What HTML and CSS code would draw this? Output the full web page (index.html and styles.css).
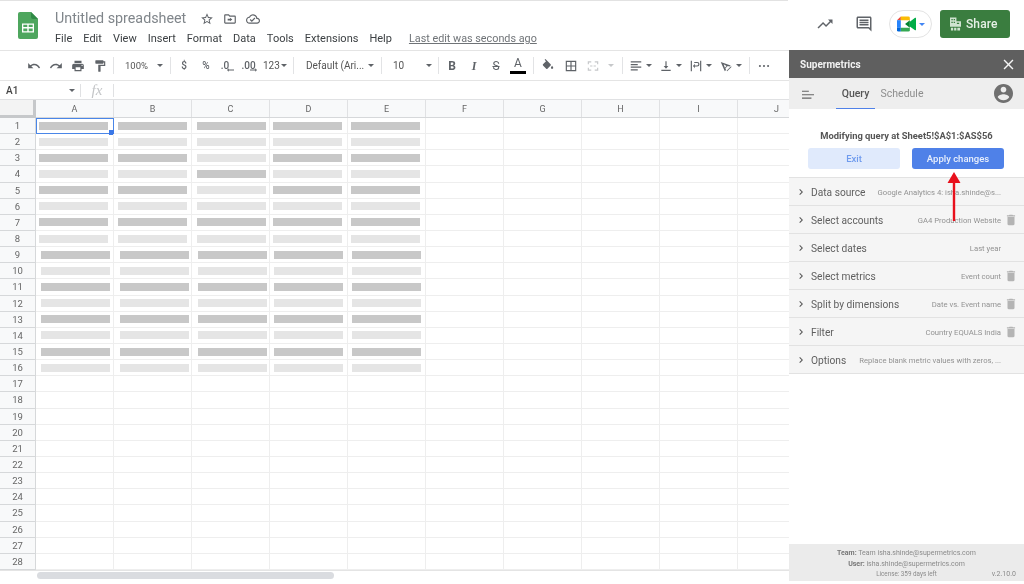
FILE: index.html
```html
<!DOCTYPE html>
<html lang="en">
<head>
<meta charset="utf-8">
<title>Untitled spreadsheet</title>
<link rel="stylesheet" href="styles.css">
</head>
<body>
<div class="topline"></div>
<header class="topbar">
  <svg class="logo" viewBox="0 0 20 27"><path fill="#4ea65e" d="M2 0h11l7 7v18a2 2 0 0 1-2 2H2a2 2 0 0 1-2-2V2a2 2 0 0 1 2-2z"/><path fill="#2f8a46" d="M13 0l7 7h-5a2 2 0 0 1-2-2z"/><path fill="#fff" d="M4 11.500h12v9H4zM5.300 12.800v2.300h4v-2.300zm5.400 0v2.300h4v-2.300zm-5.400 3.600v2.800h4v-2.800zm5.400 0v2.800h4v-2.800z" fill-rule="evenodd"/></svg>
  <div class="titleblock">
    <div class="titlerow">
      <span class="doctitle">Untitled spreadsheet</span>
      <svg class="ic14" viewBox="0 0 24 24"><path d="M22 9.240l-7.190-.62L12 2 9.190 8.630 2 9.240l5.460 4.730L5.820 21 12 17.270 18.180 21l-1.630-7.030L22 9.240zM12 15.400l-3.760 2.270 1-4.280-3.320-2.880 4.380-.38L12 6.100l1.710 4.040 4.380.38-3.320 2.880 1 4.280L12 15.400z"/></svg>
      <svg class="ic14" viewBox="0 0 24 24"><path d="M20 6h-8l-2-2H4c-1.100 0-2 .9-2 2v12c0 1.100.9 2 2 2h16c1.100 0 2-.9 2-2V8c0-1.100-.9-2-2-2zm0 12H4V6h5.170l2 2H20v10zM12 11.500V10l4 3-4 3v-1.500H8v-3z"/></svg>
      <svg class="ic14" viewBox="0 0 24 24"><path d="M19.350 10.040C18.670 6.590 15.640 4 12 4 9.110 4 6.600 5.640 5.350 8.040 2.340 8.360 0 10.910 0 14c0 3.310 2.690 6 6 6h13c2.760 0 5-2.240 5-5 0-2.640-2.050-4.780-4.650-4.960zM19 18H6c-2.210 0-4-1.790-4-4 0-2.050 1.530-3.760 3.560-3.970l1.070-.11.5-.95C8.080 7.140 9.940 6 12 6c2.620 0 4.880 1.860 5.390 4.430l.3 1.500 1.530.11c1.560.1 2.780 1.410 2.780 2.960 0 1.650-1.350 3-3 3zm-9-3.820l-2.090-2.090L6.500 13.500 10 17l6.010-6.010-1.410-1.410z"/></svg>
    </div>
    <nav class="menu">
      <span>File</span><span>Edit</span><span>View</span><span>Insert</span><span>Format</span><span>Data</span><span>Tools</span><span>Extensions</span><span>Help</span><a class="lastedit">Last edit was seconds ago</a>
    </nav>
  </div>
  <div class="topright">
    <svg class="ic18 trend" viewBox="0 0 24 24"><path d="M16 6l2.290 2.290-4.880 4.880-4-4L2 16.590 3.410 18l6-6 4 4 6.300-6.290L22 12V6z"/></svg>
    <svg class="ic18 cmt" viewBox="0 0 24 24"><path d="M21.990 4c0-1.100-.89-2-1.990-2H4c-1.100 0-2 .9-2 2v12c0 1.100.9 2 2 2h14l4 4-.01-18zM20 4v13.170L18.830 16H4V4h16zM6 12h12v2H6zm0-3h12v2H6zm0-3h12v2H6z"/></svg>
    <div class="meet">
      <svg class="meeticon" viewBox="0 0 20 16"><path fill="#ea4335" d="M4 0v4H0z"/><path fill="#fbbc04" d="M4 0h8a1.500 1.500 0 0 1 1.500 1.500V4H4z"/><path fill="#2684fc" d="M0 4h4v8H0z"/><path fill="#0066da" d="M0 12h4v4H1.500A1.500 1.500 0 0 1 0 14.500z"/><path fill="#34a853" d="M4 12h9.500v2.500A1.500 1.500 0 0 1 12 16H4z"/><path fill="#00832d" d="M8.500 8l5-4v8z"/><path fill="#00ac47" d="M13.500 5.500L19 1.500a.6.6 0 0 1 1 .5v12a.6.6 0 0 1-1 .5l-5.500-4z"/></svg>
      <i class="caret blue"></i>
    </div>
    <div class="share">
      <svg class="bld" viewBox="0 0 12 14"><path fill="#cfe3d0" d="M0 0h7v4h5v6H0zM1.500 1.500v1.500h1.500V1.500zm2.500 0v1.500h1.500V1.500zm-2.500 3v1.500h1.500V4.500zm2.500 0v1.500h1.500V4.500zm3.500 1V7h2.500V5.500zM1 11h2.500v3H1zm3.500 0H7v3H4.500zm3.500 0h3v3H8z" fill-rule="evenodd"/></svg>
      <span>Share</span>
    </div>
  </div>
</header>

<main class="main">
  <section class="sheet">
    <div class="toolbar">
      <svg class="ti" viewBox="0 0 24 24"><path d="M12.500 8c-2.650 0-5.050.99-6.900 2.600L2 7v9h9l-3.620-3.620c1.390-1.160 3.160-1.880 5.120-1.880 3.540 0 6.550 2.310 7.600 5.500l2.370-.78C21.080 11.030 17.150 8 12.500 8z"/></svg>
      <svg class="ti" viewBox="0 0 24 24"><path d="M18.400 10.600C16.550 8.990 14.150 8 11.500 8c-4.650 0-8.580 3.030-9.960 7.220L3.900 16c1.050-3.190 4.050-5.500 7.600-5.500 1.950 0 3.730.72 5.120 1.880L13 16h9V7l-3.600 3.600z"/></svg>
      <svg class="ti" viewBox="0 0 24 24"><path d="M19 8H5c-1.660 0-3 1.340-3 3v6h4v4h12v-4h4v-6c0-1.660-1.340-3-3-3zm-3 11H8v-5h8v5zm3-7c-.55 0-1-.45-1-1s.45-1 1-1 1 .45 1 1-.45 1-1 1zm-1-9H6v4h12V3z"/></svg>
      <svg class="ti" viewBox="0 0 24 24"><path d="M18 4V3c0-.55-.45-1-1-1H5c-.55 0-1 .45-1 1v4c0 .55.45 1 1 1h12c.55 0 1-.45 1-1V6h1v4H9v11c0 .55.45 1 1 1h2c.55 0 1-.45 1-1v-9h8V4h-3z"/></svg>
      <i class="sep s1"></i>
      <span class="tt w-zoom">100%</span><i class="caret c-zoom"></i>
      <i class="sep s2"></i>
      <span class="tg">$</span>
      <span class="tg">%</span>
      <span class="tg dec d1">.0<svg viewBox="0 0 8 4"><path d="M0 2l2-2v1.500h6v1H2V4z"/></svg></span>
      <span class="tg dec d2">.00<svg viewBox="0 0 8 4"><path d="M8 2L6 0v1.500H0v1h6V4z"/></svg></span>
      <span class="tt w-123">123</span><i class="caret c-123"></i>
      <i class="sep s3"></i>
      <span class="tt w-font">Default (Ari...</span><i class="caret c-font"></i>
      <i class="sep s4"></i>
      <span class="tt w-size">10</span><i class="caret c-size"></i>
      <i class="sep s5"></i>
      <span class="tl bold">B</span>
      <span class="tl ital">I</span>
      <span class="tl strike">S</span>
      <span class="tl color">A</span>
      <i class="sep s6"></i>
      <svg class="ti fill" viewBox="0 0 24 24"><path d="M16.560 8.940L7.620 0 6.210 1.410l2.380 2.380-5.150 5.150c-.59.59-.59 1.540 0 2.120l5.500 5.500c.29.29.68.44 1.060.44s.77-.15 1.060-.44l5.500-5.500c.59-.58.59-1.530 0-2.120zM19 11.500s-2 2.170-2 3.500c0 1.100.9 2 2 2s2-.9 2-2c0-1.330-2-3.500-2-3.500z"/></svg>
      <svg class="ti" viewBox="0 0 24 24"><path d="M3 3v18h18V3H3zm8 16H5v-6h6v6zm0-8H5V5h6v6zm8 8h-6v-6h6v6zm0-8h-6V5h6v6z"/></svg>
      <svg class="ti mrg" viewBox="0 0 24 24"><path d="M3 4h6v2H5v3H3zM15 4h6v5h-2V6h-4zM3 15h2v3h4v2H3zM19 15h2v5h-6v-2h4zM7 11h4v2H7zM13 11h4v2h-4z"/></svg>
      <i class="caret light c-mrg"></i>
      <i class="sep s7"></i>
      <svg class="ti" viewBox="0 0 24 24"><path d="M3 4h18v2H3zM3 8.500h12v2H3zM3 13h18v2H3zM3 17.500h12v2H3z"/></svg>
      <i class="caret c-al"></i>
      <svg class="ti" viewBox="0 0 24 24"><path d="M4 18.500h16v2H4zM11 4h2v8h3l-4 4.500L8 12h3z"/></svg>
      <i class="caret c-al"></i>
      <svg class="ti" viewBox="0 0 24 24"><path d="M3 3h2v18H3zM19 3h2v18h-2zM7 11h7a2 2 0 0 0 0-4H9V5h5a4 4 0 0 1 0 8H7v-2z M10 16l-3-4 3-4z"/></svg>
      <i class="caret c-al"></i>
      <svg class="ti" viewBox="0 0 24 24"><path d="M3 5l17 6-2 2-3-1-4 4 1 3-2 2zM8 9l2 6 3-3zM13 20l8-8v2l-7 7z"/></svg>
      <i class="caret c-rot"></i>
      <i class="sep s8"></i>
      <svg class="ti" viewBox="0 0 24 24"><circle cx="5" cy="12" r="1.800"/><circle cx="12" cy="12" r="1.800"/><circle cx="19" cy="12" r="1.800"/></svg>
    </div>
    <div class="formula">
      <span class="namebox">A1</span><i class="caret c-name"></i>
      <i class="fsep"></i>
      <span class="fx">fx</span>
      <i class="fsep"></i>
    </div>
    <div class="colhead">
      <span class="corner"></span><span>A</span><span>B</span><span>C</span><span>D</span><span>E</span><span>F</span><span>G</span><span>H</span><span>I</span><span>J</span>
    </div>
    <div class="rows">
      <div class="row"><span class="rh">1</span><b class="a1"><u class="d"></u></b><b><u class="d"></u></b><b><u class="d"></u></b><b><u class="d"></u></b><b><u class="d"></u></b><b></b><b></b><b></b><b></b><b></b></div>
      <div class="row"><span class="rh">2</span><b><u></u></b><b><u></u></b><b><u></u></b><b><u></u></b><b><u></u></b><b></b><b></b><b></b><b></b><b></b></div>
      <div class="row"><span class="rh">3</span><b><u class="d"></u></b><b><u class="d"></u></b><b><u></u></b><b><u class="d"></u></b><b><u class="d"></u></b><b></b><b></b><b></b><b></b><b></b></div>
      <div class="row"><span class="rh">4</span><b><u></u></b><b><u></u></b><b><u class="d"></u></b><b><u></u></b><b><u></u></b><b></b><b></b><b></b><b></b><b></b></div>
      <div class="row"><span class="rh">5</span><b><u class="d"></u></b><b><u class="d"></u></b><b><u></u></b><b><u class="d"></u></b><b><u class="d"></u></b><b></b><b></b><b></b><b></b><b></b></div>
      <div class="row"><span class="rh">6</span><b><u></u></b><b><u></u></b><b><u></u></b><b><u></u></b><b><u></u></b><b></b><b></b><b></b><b></b><b></b></div>
      <div class="row"><span class="rh">7</span><b><u class="d"></u></b><b><u class="d"></u></b><b><u class="d"></u></b><b><u class="d"></u></b><b><u class="d"></u></b><b></b><b></b><b></b><b></b><b></b></div>
      <div class="row"><span class="rh">8</span><b><u></u></b><b><u></u></b><b><u></u></b><b><u></u></b><b><u></u></b><b></b><b></b><b></b><b></b><b></b></div>
      <div class="row shift"><span class="rh">9</span><b><u class="d"></u></b><b><u class="d"></u></b><b><u class="d"></u></b><b><u class="d"></u></b><b><u class="d"></u></b><b></b><b></b><b></b><b></b><b></b></div>
      <div class="row shift"><span class="rh">10</span><b><u></u></b><b><u></u></b><b><u></u></b><b><u></u></b><b><u></u></b><b></b><b></b><b></b><b></b><b></b></div>
      <div class="row shift"><span class="rh">11</span><b><u class="d"></u></b><b><u class="d"></u></b><b><u class="d"></u></b><b><u class="d"></u></b><b><u class="d"></u></b><b></b><b></b><b></b><b></b><b></b></div>
      <div class="row shift"><span class="rh">12</span><b><u></u></b><b><u></u></b><b><u></u></b><b><u></u></b><b><u></u></b><b></b><b></b><b></b><b></b><b></b></div>
      <div class="row shift"><span class="rh">13</span><b><u class="d"></u></b><b><u class="d"></u></b><b><u class="d"></u></b><b><u class="d"></u></b><b><u class="d"></u></b><b></b><b></b><b></b><b></b><b></b></div>
      <div class="row shift"><span class="rh">14</span><b><u></u></b><b><u></u></b><b><u></u></b><b><u></u></b><b><u></u></b><b></b><b></b><b></b><b></b><b></b></div>
      <div class="row shift"><span class="rh">15</span><b><u class="d"></u></b><b><u class="d"></u></b><b><u class="d"></u></b><b><u class="d"></u></b><b><u class="d"></u></b><b></b><b></b><b></b><b></b><b></b></div>
      <div class="row shift"><span class="rh">16</span><b><u></u></b><b><u></u></b><b><u></u></b><b><u></u></b><b><u></u></b><b></b><b></b><b></b><b></b><b></b></div>
      <div class="row"><span class="rh">17</span><b></b><b></b><b></b><b></b><b></b><b></b><b></b><b></b><b></b><b></b></div>
      <div class="row"><span class="rh">18</span><b></b><b></b><b></b><b></b><b></b><b></b><b></b><b></b><b></b><b></b></div>
      <div class="row"><span class="rh">19</span><b></b><b></b><b></b><b></b><b></b><b></b><b></b><b></b><b></b><b></b></div>
      <div class="row"><span class="rh">20</span><b></b><b></b><b></b><b></b><b></b><b></b><b></b><b></b><b></b><b></b></div>
      <div class="row"><span class="rh">21</span><b></b><b></b><b></b><b></b><b></b><b></b><b></b><b></b><b></b><b></b></div>
      <div class="row"><span class="rh">22</span><b></b><b></b><b></b><b></b><b></b><b></b><b></b><b></b><b></b><b></b></div>
      <div class="row"><span class="rh">23</span><b></b><b></b><b></b><b></b><b></b><b></b><b></b><b></b><b></b><b></b></div>
      <div class="row"><span class="rh">24</span><b></b><b></b><b></b><b></b><b></b><b></b><b></b><b></b><b></b><b></b></div>
      <div class="row"><span class="rh">25</span><b></b><b></b><b></b><b></b><b></b><b></b><b></b><b></b><b></b><b></b></div>
      <div class="row"><span class="rh">26</span><b></b><b></b><b></b><b></b><b></b><b></b><b></b><b></b><b></b><b></b></div>
      <div class="row"><span class="rh">27</span><b></b><b></b><b></b><b></b><b></b><b></b><b></b><b></b><b></b><b></b></div>
      <div class="row"><span class="rh">28</span><b></b><b></b><b></b><b></b><b></b><b></b><b></b><b></b><b></b><b></b></div>
    </div>
    <div class="hscroll"><div class="thumb"></div></div>
  </section>

  <aside class="panel">
    <div class="phead"><span>Supermetrics</span>
      <svg viewBox="0 0 24 24"><path d="M19 6.410L17.590 5 12 10.590 6.410 5 5 6.410 10.590 12 5 17.590 6.410 19 12 13.410 17.590 19 19 17.590 13.410 12 19 6.410z"/></svg>
    </div>
    <div class="ptabs">
      <svg class="burger" viewBox="0 0 14 10"><path d="M0 0h8v1.300H0zM0 4h14v1.300H0zM0 8h11v1.300H0z"/></svg>
      <span class="tab on">Query</span>
      <span class="tab">Schedule</span>
      <svg class="acct" viewBox="2 2 20 20"><path d="M12 2C6.480 2 2 6.480 2 12s4.480 10 10 10 10-4.480 10-10S17.520 2 12 2zm0 3c1.660 0 3 1.340 3 3s-1.340 3-3 3-3-1.340-3-3 1.340-3 3-3zm0 14.200c-2.500 0-4.710-1.280-6-3.220.03-1.990 4-3.080 6-3.080 1.990 0 5.970 1.090 6 3.080-1.290 1.940-3.500 3.220-6 3.220z"/></svg>
    </div>
    <div class="modify">
      <p>Modifying query at Sheet5!$A$1:$AS$56</p>
      <div class="btns"><button class="exit">Exit</button><button class="apply">Apply changes</button></div>
    </div>
    <div class="secs">
      <div class="sec"><svg class="chev" viewBox="0 0 24 24"><path d="M10 6L8.590 7.410 13.170 12l-4.580 4.590L10 18l6-6z"/></svg><span class="sn">Data source</span><span class="sv">Google Analytics 4: isha.shinde@s...</span><i class="tr"></i></div>
      <div class="sec"><svg class="chev" viewBox="0 0 24 24"><path d="M10 6L8.590 7.410 13.170 12l-4.580 4.590L10 18l6-6z"/></svg><span class="sn">Select accounts</span><span class="sv">GA4 Production Website</span><svg class="tr" viewBox="0 0 24 24"><path d="M6 19c0 1.100.9 2 2 2h8c1.100 0 2-.9 2-2V7H6v12zM19 4h-3.500l-1-1h-5l-1 1H5v2h14V4z"/></svg></div>
      <div class="sec"><svg class="chev" viewBox="0 0 24 24"><path d="M10 6L8.590 7.410 13.170 12l-4.580 4.590L10 18l6-6z"/></svg><span class="sn">Select dates</span><span class="sv">Last year</span><i class="tr"></i></div>
      <div class="sec"><svg class="chev" viewBox="0 0 24 24"><path d="M10 6L8.590 7.410 13.170 12l-4.580 4.590L10 18l6-6z"/></svg><span class="sn">Select metrics</span><span class="sv">Event count</span><svg class="tr" viewBox="0 0 24 24"><path d="M6 19c0 1.100.9 2 2 2h8c1.100 0 2-.9 2-2V7H6v12zM19 4h-3.500l-1-1h-5l-1 1H5v2h14V4z"/></svg></div>
      <div class="sec"><svg class="chev" viewBox="0 0 24 24"><path d="M10 6L8.590 7.410 13.170 12l-4.580 4.590L10 18l6-6z"/></svg><span class="sn">Split by dimensions</span><span class="sv">Date vs. Event name</span><svg class="tr" viewBox="0 0 24 24"><path d="M6 19c0 1.100.9 2 2 2h8c1.100 0 2-.9 2-2V7H6v12zM19 4h-3.500l-1-1h-5l-1 1H5v2h14V4z"/></svg></div>
      <div class="sec"><svg class="chev" viewBox="0 0 24 24"><path d="M10 6L8.590 7.410 13.170 12l-4.580 4.590L10 18l6-6z"/></svg><span class="sn">Filter</span><span class="sv">Country EQUALS India</span><svg class="tr" viewBox="0 0 24 24"><path d="M6 19c0 1.100.9 2 2 2h8c1.100 0 2-.9 2-2V7H6v12zM19 4h-3.500l-1-1h-5l-1 1H5v2h14V4z"/></svg></div>
      <div class="sec"><svg class="chev" viewBox="0 0 24 24"><path d="M10 6L8.590 7.410 13.170 12l-4.580 4.590L10 18l6-6z"/></svg><span class="sn">Options</span><span class="sv">Replace blank metric values with zeros, ...</span><i class="tr"></i></div>
    </div>
    <div class="pspace"></div>
    <footer class="pfoot">
      <div><strong>Team:</strong> Team isha.shinde@supermetrics.com</div>
      <div><strong>User:</strong> isha.shinde@supermetrics.com</div>
      <div class="lic"><span></span><span>License: 359 days left</span><span class="ver">v.2.10.0</span></div>
    </footer>
    <svg class="arrow" viewBox="0 0 14 49"><path fill="#e8101c" d="M7 0l6.500 11H8.200v38H5.800V11H.5z"/></svg>
  </aside>
</main>
</body>
</html>
```
FILE: styles.css
```css
* { box-sizing: border-box; }
html, body { margin: 0; height: 584px; overflow: hidden; background: #fff; }
body { font-family: Roboto, "Liberation Sans", sans-serif; color: #444; position: relative; filter: blur(.3px); }
svg { display: block; flex: none; fill: #5f6368; }

.topline { width: 788px; height: 1px; background: #e2e2e2; }
.topbar { height: 50px; display: flex; border-bottom: 1px solid #e4e4e4; }
.logo { width: 20px; height: 27px; margin: 11px 17px 0 18px; }
.titleblock { display: flex; flex-direction: column; }
.titlerow { display: flex; align-items: center; height: 17px; margin-top: 8px; }
.doctitle { font-size: 14.300px; color: #80868b; width: 145px; white-space: nowrap; }
.ic14 { width: 14px; height: 14px; margin-right: 9px; margin-top: 2px; }
.menu { display: flex; margin-top: 5px; font-size: 11px; line-height: 16px; color: #3c4043; white-space: nowrap; }
.menu span { margin-right: 11px; }
.lastedit { margin-left: 6px; font-size: 10.800px; color: #6f7377; text-decoration: underline; }

.topright { margin-left: auto; display: flex; align-items: center; height: 49px; padding-right: 14px; padding-bottom: 3px; }
.trend { margin-right: 21px; }
.cmt { margin-right: 16px; }
.ic18 { width: 18px; height: 18px; }
.meet { width: 43px; height: 28px; border: 1px solid #e3e3e3; border-radius: 14px; display: flex; align-items: center; padding-left: 7px; margin-right: 8px; }
.meeticon { width: 19px; height: 16px; }
.meet .caret { margin-left: 3px; }
.share { width: 70px; height: 28px; background: #3a7d3f; border-radius: 3px; display: flex; align-items: center; padding-left: 10px; color: #e6f0e6; font-size: 12px; font-weight: 500; letter-spacing: .1px; }
.bld { width: 11px; height: 14px; margin-right: 5px; fill: #cfe3d0; }

.caret { display: block; flex: none; width: 0; height: 0; border: 3px solid transparent; border-top: 3.500px solid #5f6368; border-bottom: 0; }
.caret.blue { border-top-color: #4285f4; }
.caret.light { border-top-color: #c6c8ca; }

.main { display: flex; height: 533px; }
.sheet { width: 789px; flex: none; overflow: hidden; }
.toolbar { height: 30px; display: flex; align-items: center; padding-left: 23px; border-bottom: 1px solid #e4e4e4; font-size: 10px; color: #555; white-space: nowrap; }
.toolbar > * { flex: none; }
.ti { width: 14px; height: 14px; margin: 0 4px; fill: #5f6368; }
.sep { display: block; width: 1px; height: 17px; background: #e2e3e5; }
.s1 { margin: 0 11px 0 2px; }
.tt { display: block; }
.w-zoom { width: 32px; font-size: 9.500px; }
.c-zoom { margin-right: 7px; }
.s2 { margin-right: 2px; }
.tg { width: 22px; text-align: center; font-weight: 500; color: #5f6368; }
.d1 { padding-right: 6px; }
.d2 { padding-right: 3px; }
.dec svg { width: 7px; height: 4px; margin: -3px 0 0 10px; }
.d2 svg { margin-left: 11px; }
.w-123 { margin-left: 2px; width: 18px; }
.c-123 { margin-right: 6px; }
.s3 { margin-right: 12px; }
.w-font { width: 62px; }
.c-font { margin-right: 7px; }
.s4 { margin-right: 11px; }
.w-size { width: 33px; }
.c-size { margin-right: 6px; }
.s5 { margin-right: 2px; }
.tl { width: 22px; text-align: center; font-size: 12px; color: #5f6368; line-height: 14px; }
.bold { font-weight: 700; }
.ital { font-style: italic; font-family: "Liberation Serif", serif; font-weight: 700; }
.strike { text-decoration: line-through; }
.color { border-bottom: 3px solid #000; width: 16px; margin: 0 3px; line-height: 13px; height: 17px; }
.s6 { margin: 0 3px 0 4px; }
.fill { margin-right: 5px; }
.mrg { fill: #c6c8ca; }
.c-mrg { margin: 0 8px 0 4px; }
.s7 { margin-right: 2px; }
.c-al { margin: 0 3px 0 -1px; }
.c-rot { margin: 0 7px 0 -1px; }
.s8 { margin-right: 3px; }

.formula { height: 18px; display: flex; align-items: center; font-size: 10px; font-weight: 500; color: #444; }
.namebox { padding-left: 6px; width: 69px; }
.c-name { margin-right: 5px; }
.fsep { display: block; width: 1px; height: 13px; background: #e0e1e3; }
.fx { width: 32px; text-align: center; font-family: "Liberation Serif", serif; font-style: italic; font-weight: 400; font-size: 15px; color: #c3c5c7; }

.colhead { height: 19px; display: grid; grid-template-columns: 36px repeat(10, 78px); background: #f8f9fa; border-top: 1px solid #e0e1e3; border-bottom: 1px solid #d6d8da; font-size: 9px; color: #666; }
.colhead span { display: flex; align-items: center; justify-content: center; border-right: 1px solid #e0e1e3; }
.colhead .corner { border-right: 3px solid #c6c8ca; border-bottom: 3px solid #c6c8ca; background: #f3f3f3; margin-bottom: -1px; }

.rows { height: 452px; display: grid; grid-template-rows: repeat(28, 1fr); }
.row { display: grid; grid-template-columns: 36px repeat(10, 78px); }
.rh { display: flex; align-items: center; justify-content: center; background: #f8f9fa; border-right: 1px solid #d6d8da; border-bottom: 1px solid #d6d8da; font-size: 9.500px; color: #666; }
.row b { display: flex; align-items: center; border-right: 1px solid #eee; border-bottom: 1px solid #eee; padding-left: 3px; position: relative; }
.row b:nth-child(3) { padding-left: 4px; }
.row b:nth-child(4) { padding-left: 5px; }
.row.shift b { padding-left: 4px; }
.row.shift b:nth-child(2) { padding-left: 5px; }
.row.shift b:nth-child(3), .row.shift b:nth-child(4) { padding-left: 6px; }
.row u { display: block; width: 69px; height: 8px; background: #e5e5e5; }
.row u.d { background: #c8c8c8; }
.a1 { outline: 1.500px solid #4a86e8; outline-offset: -1.500px; }
.a1::after { content: ""; position: absolute; right: -1px; bottom: -2px; width: 5px; height: 5px; background: #3b78e7; }

.hscroll { height: 13px; border-top: 1px solid #e4e4e4; padding: 1px 0 0 37px; }
.thumb { width: 297px; height: 7px; border-radius: 4px; background: #dadce0; }

.panel { flex: 1; display: flex; flex-direction: column; position: relative; background: #fff; }
.phead { height: 28px; background: #5f5f5f; display: flex; align-items: center; justify-content: space-between; padding: 0 7px 0 11px; color: #f2f2f2; font-size: 10px; font-weight: 700; margin-top: -1px; flex: none; }
.phead svg { width: 17px; height: 17px; fill: #f5f5f5; }
.ptabs { height: 31px; background: #eee; display: flex; align-items: stretch; font-size: 10.500px; color: #8d8d8d; flex: none; }
.burger { width: 12px; height: 10px; margin: 12px 1px 0 13px; fill: #666; }
.tab { display: flex; align-items: center; justify-content: center; width: 39px; margin-left: 21px; border-bottom: 1.500px solid transparent; }
.tab.on { color: #555; font-weight: 500; border-bottom-color: #4f81e8; }
.tab + .tab { margin-left: 6px; width: 42px; }
.acct { width: 19px; height: 19px; margin: 6px 11px 0 auto; fill: #707070; }
.modify { height: 69px; flex: none; padding-top: 21px; text-align: center; border-bottom: 1px solid #e2e2e2; }
.modify p { margin: 0; font-size: 9.400px; line-height: 12px; font-weight: 700; color: #555; }
.btns { display: flex; gap: 12px; padding-left: 19px; margin-top: 6px; }
.btns button { width: 92px; height: 21px; border: 0; border-radius: 3px; font: 500 9.500px Roboto, sans-serif; padding: 0; }
.exit { background: #e0eafc; color: #6f9bee; }
.apply { background: #4f81e8; color: #e8effc; }
.secs { flex: none; background: #f5f5f5; }
.sec { height: 28px; display: flex; align-items: center; border-bottom: 1px solid #e2e2e2; padding: 1px 0 0 6px; }
.chev { width: 12px; height: 12px; fill: #555; margin-right: 4px; }
.sn { font-size: 10.200px; color: #5f5f5f; white-space: nowrap; }
.sv { margin-left: auto; font-size: 7.700px; color: #929292; white-space: nowrap; }
.tr { display: block; flex: none; width: 14px; height: 14px; margin: 0 6px 0 3px; fill: #b4b4b4; }
.pspace { flex: 1; }
.pfoot { height: 37px; flex: none; margin-bottom: 3px; background: #ebebeb; text-align: center; font-size: 7px; line-height: 10.500px; color: #8a8a8a; padding-top: 4px; }
.pfoot strong { color: #777; }
.lic { display: grid; grid-template-columns: 1fr auto 1fr; font-size: 6.300px; }
.ver { text-align: right; padding-right: 8px; font-size: 7px; }
.arrow { position: absolute; left: 158px; top: 121px; width: 14px; height: 49px; }
```
